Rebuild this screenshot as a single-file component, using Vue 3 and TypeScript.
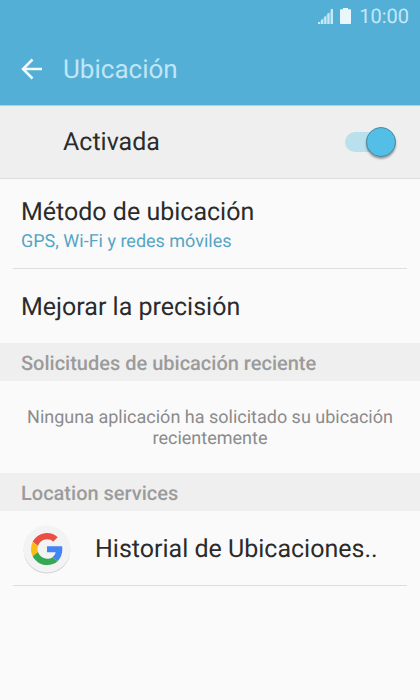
<script setup lang="ts">
import { ref } from 'vue'

const enabled = ref<boolean>(true)
</script>

<template>
  <div class="screen">
    <header class="top">
      <div class="status">
        <svg class="signal" width="17" height="17" viewBox="0 0 17 17" aria-hidden="true">
          <path d="M1 14h2v2H1zM4 11.5h2V16H4zM7.200 8.500h2V16h-2zM10.400 5.200h2V16h-2zM13.800 1h2.200v15h-2.200z" fill="#c5e8f6" />
          <path d="M0.500 16L16 0.800V16z" fill="#d0ecf7" opacity="0.35" />
        </svg>
        <svg class="battery" width="11" height="16" viewBox="0 0 11 16" aria-hidden="true">
          <path d="M3 0h5v1.200h2.200q.8 0 .8.800v13.200q0 .8-.8.800H.8q-.8 0-.8-.8V2q0-.8.8-.8H3z" fill="#e9f7fc" />
        </svg>
        <time class="clock">10:00</time>
      </div>
      <div class="bar">
        <button class="back" type="button" aria-label="Atrás">
          <svg width="22" height="22" viewBox="0 0 22 22" aria-hidden="true">
            <path d="M11.500 1.500L2 11l9.500 9.500M2.500 11H21" fill="none" stroke="#f2fbff" stroke-width="2.500" />
          </svg>
        </button>
        <h1 class="title">Ubicación</h1>
      </div>
    </header>

    <main>
      <label class="master">
        <span class="name">Activada</span>
        <input v-model="enabled" class="switch" type="checkbox" role="switch" />
      </label>

      <a class="item" href="#metodo">
        <span class="name">Método de ubicación</span>
        <span class="detail">GPS, Wi-Fi y redes móviles</span>
      </a>
      <a class="item last" href="#precision">
        <span class="name">Mejorar la precisión</span>
      </a>

      <h2 class="section">Solicitudes de ubicación reciente</h2>
      <p class="empty">Ninguna aplicación ha solicitado su ubicación recientemente</p>

      <h2 class="section">Location services</h2>
      <a class="item service" href="#historial">
        <svg class="google" width="50" height="50" viewBox="0 0 50 50" aria-hidden="true">
          <circle cx="25" cy="26.300" r="23.300" fill="#d2d2d2" />
          <circle cx="25" cy="25" r="23.500" fill="#f3f3f3" />
          <g transform="translate(9 9) scale(0.667)">
            <path fill="#e94f43" d="M24 9.500c3.540 0 6.710 1.220 9.210 3.600l6.850-6.850C35.900 2.380 30.470 0 24 0 14.620 0 6.510 5.380 2.560 13.220l7.980 6.190C12.430 13.720 17.740 9.500 24 9.500z" />
            <path fill="#4285f4" d="M46.980 24.550c0-1.570-.15-3.090-.38-4.550H24v9.020h12.940c-.58 2.960-2.260 5.480-4.780 7.180l7.730 6c4.510-4.180 7.090-10.360 7.090-17.650z" />
            <path fill="#fbbc15" d="M10.530 28.590A14.500 14.500 0 0 1 9.770 24c0-1.600.27-3.140.76-4.590l-7.980-6.190A23.900 23.900 0 0 0 0 24c0 3.880.92 7.540 2.560 10.780z" />
            <path fill="#34a853" d="M24 48c6.480 0 11.930-2.130 15.890-5.810l-7.730-6c-2.150 1.450-4.920 2.300-8.160 2.300-6.260 0-11.570-4.220-13.470-9.910l-7.980 6.190C6.510 42.620 14.620 48 24 48z" />
          </g>
        </svg>
        <span class="name">Historial de Ubicaciones..</span>
      </a>
    </main>
  </div>
</template>

<style>
body {
  background: #fafafa;
}
</style>

<style scoped>
.screen {
  min-height: 100vh;
  background: #fafafa;
  color: #2b2b2b;
  font-family: Roboto, "Liberation Sans", sans-serif;
  font-size: 25px;
  line-height: 32px;
  text-rendering: geometricPrecision;
}

.top {
  background: #53afd6;
  border-bottom: 1px solid #a9d3e5;
}

.status {
  display: flex;
  align-items: center;
  justify-content: flex-end;
  height: 32px;
  padding-right: 11px;
}

.battery {
  margin: 0 8px 0 6px;
}

.clock {
  color: #c5e8f6;
  font-size: 20px;
}

.bar {
  display: flex;
  align-items: center;
  gap: 20px;
  height: 73px;
  padding-left: 21px;
}

.back {
  display: flex;
  padding: 0;
  border: 0;
  background: none;
  cursor: pointer;
}

.title {
  margin: 0;
  padding-top: 2px;
  color: #c0e6f6;
  font-size: 26px;
  font-weight: 400;
}

.master {
  display: flex;
  align-items: center;
  justify-content: space-between;
  box-sizing: border-box;
  height: 73px;
  padding: 0 24px 0 63px;
  border-bottom: 1px solid #dedede;
  background: #efefef;
}

.name {
  padding-top: 2px;
}

.switch {
  display: flex;
  align-items: center;
  appearance: none;
  width: 51px;
  height: 20px;
  margin: 0;
  border-radius: 10px;
  background: #b9e0ec;
  cursor: pointer;
}

.switch::before {
  content: "";
  box-sizing: border-box;
  width: 30px;
  height: 30px;
  border: 1px solid #458ba3;
  border-radius: 50%;
  background: #54bfe6;
  box-shadow: 0 2px 2px rgba(0, 0, 0, 0.35);
}

.switch:checked::before {
  margin-left: auto;
}

.switch:not(:checked),
.switch:not(:checked)::before {
  border-color: #999999;
  background: #c8c8c8;
}

.item {
  display: flex;
  flex-direction: column;
  justify-content: center;
  box-sizing: border-box;
  min-height: 74px;
  margin: 0 13px;
  padding: 16px 8px 14px;
  border-bottom: 1px solid #dedede;
  color: inherit;
  text-decoration: none;
}

.item.last {
  border-bottom: 0;
}

.detail {
  color: #55a5c5;
  font-size: 18px;
  line-height: 25px;
}

.section {
  margin: 0;
  padding: 4px 21px 2px;
  background: #efefef;
  color: #9b9b9b;
  font-size: 20px;
  font-weight: 500;
}

.empty {
  margin: 0;
  padding: 26px 20px 24px;
  color: #8b8b8b;
  font-size: 18px;
  line-height: 21px;
  text-align: center;
}

.item.service {
  flex-direction: row;
  align-items: center;
  justify-content: flex-start;
  gap: 23px;
  min-height: 75px;
  padding: 13px 9px 11px;
}
</style>
